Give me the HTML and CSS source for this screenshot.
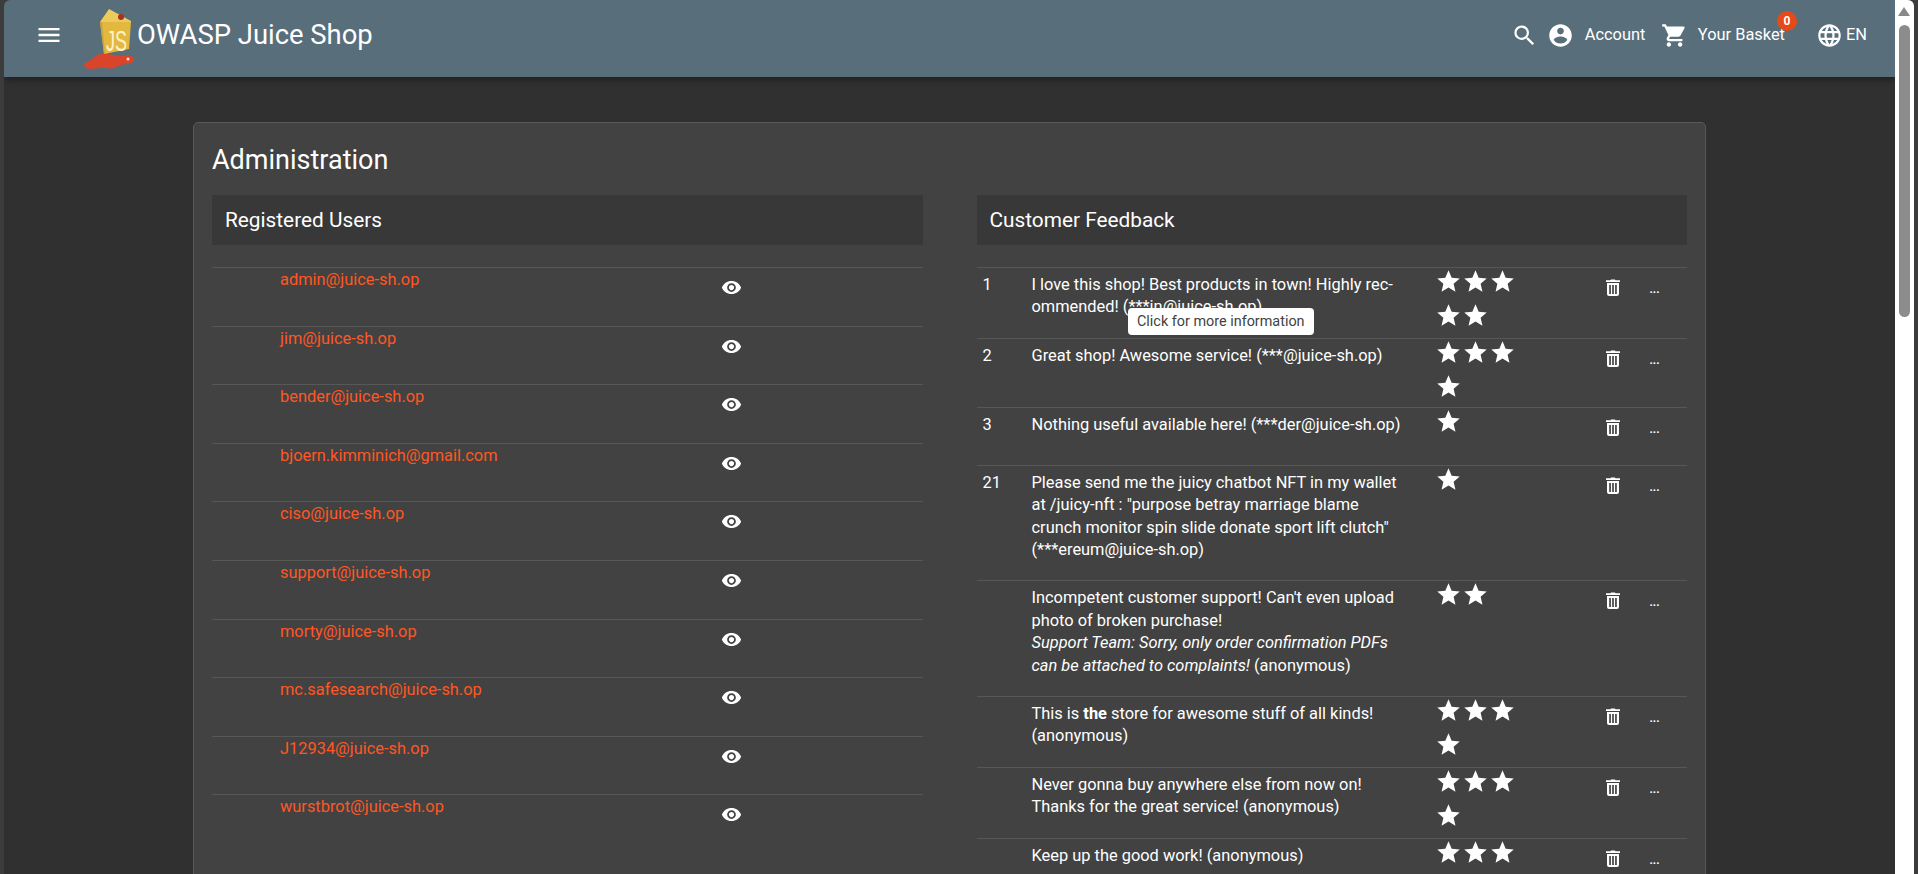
FILE: index.html
```html
<!DOCTYPE html>
<html lang="en">
<head>
    <meta charset="UTF-8">
    <meta name="viewport" content="width=device-width, initial-scale=1.0">
    <title>OWASP Juice Shop</title>
    <link rel="stylesheet" href="styles.css">
</head>
<body>
    <svg class="sprites" width="0" height="0">
        <symbol id="i-star" viewBox="0 0 24 24"><path d="M12 17.27 18.18 21l-1.64-7.03L22 9.24l-7.19-.61L12 2 9.19 8.63 2 9.24l5.46 4.73L5.82 21z"/></symbol>
        <symbol id="i-eye" viewBox="0 0 24 24"><path d="M12 4.5C7 4.5 2.73 7.61 1 12c1.73 4.39 6 7.5 11 7.5s9.27-3.11 11-7.5c-1.73-4.39-6-7.5-11-7.5zM12 17c-2.76 0-5-2.24-5-5s2.24-5 5-5 5 2.24 5 5-2.24 5-5 5zm0-8c-1.66 0-3 1.34-3 3s1.34 3 3 3 3-1.34 3-3-1.34-3-3-3z"/></symbol>
        <symbol id="i-trash" viewBox="0 0 24 24"><path fill-rule="evenodd" d="M10 3.500h4l.5.8H19v1.700H5V4.300h4.500zM6 7h12v11a2 2 0 0 1-2 2H8a2 2 0 0 1-2-2zm2.200 2v9h1.700V9zm2.950 0v9h1.700V9zm2.950 0v9h1.700V9z"/></symbol>
    </svg>

    <div class="app">
        <header class="toolbar">
            <svg class="icon menu-icon" viewBox="0 0 24 24"><path d="M3 18h18v-2H3v2zm0-5h18v-2H3v2zm0-7v2h18V6H3z"/></svg>
            <svg class="logo" viewBox="0 0 52 60">
                <path d="M0 55c4-1 8-5 13-8 4-3 8-3 12-2l14 2c4-1 9-1 11 1 2 3 0 6-4 7-5 0-9 1-13 3-3 2-5 2-9 1-7-1-12 1-17 1-3 0-5-2-7-5z" fill="#d8452a"/>
                <circle cx="45" cy="50" r="1.500" fill="#f7d9c8"/>
                <path d="M17 13 26 0l22 12v2z" fill="#ecca5c"/>
                <path d="M17 13h31l-2 27-25 5z" fill="#e3b841"/>
                <path d="M17 13l4 32h1L19 13z" fill="#c9a23c"/>
                <circle cx="38" cy="8" r="3" fill="#a5331f"/>
                <text class="logo-text" x="23" y="42" textLength="21" lengthAdjust="spacingAndGlyphs">JS</text>
            </svg>
            <span class="brand">OWASP Juice Shop</span>
            <span class="spacer"></span>
            <svg class="icon search-icon" viewBox="0 0 24 24"><path d="M15.5 14h-.79l-.28-.27A6.471 6.471 0 0 0 16 9.500 6.500 6.500 0 1 0 9.500 16c1.610 0 3.090-.59 4.230-1.570l.27.28v.79l5 4.990L20.490 19l-4.990-5zm-6 0C7.010 14 5 11.990 5 9.500S7.010 5 9.500 5 14 7.010 14 9.500 11.990 14 9.500 14z"/></svg>
            <svg class="icon account-icon" viewBox="0 0 24 24"><path d="M12 2C6.480 2 2 6.480 2 12s4.480 10 10 10 10-4.480 10-10S17.520 2 12 2zm0 3c1.660 0 3 1.340 3 3s-1.340 3-3 3-3-1.340-3-3 1.340-3 3-3zm0 14.200c-2.500 0-4.710-1.280-6-3.220.03-1.990 4-3.080 6-3.080 1.990 0 5.970 1.090 6 3.080-1.290 1.940-3.500 3.220-6 3.220z"/></svg>
            <span class="nav-label account-label">Account</span>
            <svg class="icon cart-icon" viewBox="0 0 24 24"><path d="M7 18c-1.100 0-1.990.9-1.990 2S5.900 22 7 22s2-.9 2-2-.9-2-2-2zM1 2v2h2l3.600 7.590-1.350 2.450c-.16.28-.25.61-.25.960 0 1.100.9 2 2 2h12v-2H7.420c-.14 0-.25-.11-.25-.25l.03-.12.9-1.630h7.450c.75 0 1.410-.41 1.750-1.030l3.580-6.490A1 1 0 0 0 20 4H5.210l-.94-2H1zm16 16c-1.100 0-1.990.9-1.990 2s.89 2 1.990 2 2-.9 2-2-.9-2-2-2z"/></svg>
            <span class="basket">
                <span class="nav-label">Your Basket</span>
                <span class="badge">0</span>
            </span>
            <svg class="icon globe-icon" viewBox="0 0 24 24"><path d="M11.990 2C6.470 2 2 6.480 2 12s4.470 10 9.990 10C17.520 22 22 17.520 22 12S17.520 2 11.990 2zm6.930 6h-2.950a15.650 15.650 0 0 0-1.380-3.560A8.030 8.030 0 0 1 18.920 8zM12 4.040c.83 1.200 1.480 2.530 1.910 3.960h-3.820c.43-1.430 1.080-2.760 1.910-3.960zM4.260 14C4.100 13.360 4 12.690 4 12s.1-1.360.26-2h3.380c-.08.660-.14 1.320-.14 2s.06 1.340.14 2H4.260zm.82 2h2.950c.32 1.250.78 2.450 1.380 3.560A7.987 7.987 0 0 1 5.080 16zm2.950-8H5.080a7.987 7.987 0 0 1 4.330-3.560A15.650 15.650 0 0 0 8.030 8zM12 19.960c-.83-1.200-1.480-2.530-1.910-3.960h3.820c-.43 1.430-1.080 2.760-1.910 3.960zM14.340 14H9.660c-.09-.66-.16-1.320-.16-2s.07-1.350.16-2h4.680c.09.650.16 1.320.16 2s-.07 1.340-.16 2zm.25 5.560c.6-1.110 1.060-2.310 1.380-3.560h2.950a8.030 8.030 0 0 1-4.330 3.560zM16.360 14c.08-.66.14-1.320.14-2s-.06-1.340-.14-2h3.380c.16.640.26 1.310.26 2s-.1 1.360-.26 2h-3.380z"/></svg>
            <span class="nav-label lang-label">EN</span>
        </header>

        <main class="content">
            <section class="card">
                <h1 class="card-title">Administration</h1>
                <div class="columns">
                    <div class="column">
                        <h2 class="column-head">Registered Users</h2>
                        <div class="user-list">
                            <div class="user-row"><span class="email">admin@juice-sh.op</span><svg class="eye"><use href="#i-eye"/></svg></div>
                            <div class="user-row"><span class="email">jim@juice-sh.op</span><svg class="eye"><use href="#i-eye"/></svg></div>
                            <div class="user-row"><span class="email">bender@juice-sh.op</span><svg class="eye"><use href="#i-eye"/></svg></div>
                            <div class="user-row"><span class="email">bjoern.kimminich@gmail.com</span><svg class="eye"><use href="#i-eye"/></svg></div>
                            <div class="user-row"><span class="email">ciso@juice-sh.op</span><svg class="eye"><use href="#i-eye"/></svg></div>
                            <div class="user-row"><span class="email">support@juice-sh.op</span><svg class="eye"><use href="#i-eye"/></svg></div>
                            <div class="user-row"><span class="email">morty@juice-sh.op</span><svg class="eye"><use href="#i-eye"/></svg></div>
                            <div class="user-row"><span class="email">mc.safesearch@juice-sh.op</span><svg class="eye"><use href="#i-eye"/></svg></div>
                            <div class="user-row"><span class="email">J12934@juice-sh.op</span><svg class="eye"><use href="#i-eye"/></svg></div>
                            <div class="user-row"><span class="email">wurstbrot@juice-sh.op</span><svg class="eye"><use href="#i-eye"/></svg></div>
                        </div>
                    </div>

                    <div class="column">
                        <h2 class="column-head">Customer Feedback</h2>
                        <div class="feedback-list">
                            <div class="feedback-row">
                                <span class="fb-id">1</span>
                                <p class="fb-text">I love this shop! Best products in town! Highly rec&shy;ommended! (***in@juice-sh.op)</p>
                                <div class="stars"><svg class="star"><use href="#i-star"/></svg><svg class="star"><use href="#i-star"/></svg><svg class="star"><use href="#i-star"/></svg><svg class="star"><use href="#i-star"/></svg><svg class="star"><use href="#i-star"/></svg></div>
                                <svg class="trash"><use href="#i-trash"/></svg>
                                <span class="dots">...</span>
                            </div>
                            <div class="feedback-row">
                                <span class="fb-id">2</span>
                                <p class="fb-text">Great shop! Awesome service! (***@juice-sh.op)</p>
                                <div class="stars"><svg class="star"><use href="#i-star"/></svg><svg class="star"><use href="#i-star"/></svg><svg class="star"><use href="#i-star"/></svg><svg class="star"><use href="#i-star"/></svg></div>
                                <svg class="trash"><use href="#i-trash"/></svg>
                                <span class="dots">...</span>
                            </div>
                            <div class="feedback-row">
                                <span class="fb-id">3</span>
                                <p class="fb-text">Nothing useful available here! (***der@juice-sh.op)</p>
                                <div class="stars"><svg class="star"><use href="#i-star"/></svg></div>
                                <svg class="trash"><use href="#i-trash"/></svg>
                                <span class="dots">...</span>
                            </div>
                            <div class="feedback-row">
                                <span class="fb-id">21</span>
                                <p class="fb-text">Please send me the juicy chatbot NFT in my wallet at /juicy-nft : "purpose betray marriage blame crunch monitor spin slide donate sport lift clutch" (***ereum@juice-sh.op)</p>
                                <div class="stars"><svg class="star"><use href="#i-star"/></svg></div>
                                <svg class="trash"><use href="#i-trash"/></svg>
                                <span class="dots">...</span>
                            </div>
                            <div class="feedback-row">
                                <span class="fb-id"></span>
                                <p class="fb-text">Incompetent customer support! Can't even upload photo of broken purchase!<br><em>Support Team: Sorry, only order confirmation PDFs can be attached to complaints!</em> (anonymous)</p>
                                <div class="stars"><svg class="star"><use href="#i-star"/></svg><svg class="star"><use href="#i-star"/></svg></div>
                                <svg class="trash"><use href="#i-trash"/></svg>
                                <span class="dots">...</span>
                            </div>
                            <div class="feedback-row">
                                <span class="fb-id"></span>
                                <p class="fb-text">This is <strong>the</strong> store for awesome stuff of all kinds! (anonymous)</p>
                                <div class="stars"><svg class="star"><use href="#i-star"/></svg><svg class="star"><use href="#i-star"/></svg><svg class="star"><use href="#i-star"/></svg><svg class="star"><use href="#i-star"/></svg></div>
                                <svg class="trash"><use href="#i-trash"/></svg>
                                <span class="dots">...</span>
                            </div>
                            <div class="feedback-row">
                                <span class="fb-id"></span>
                                <p class="fb-text">Never gonna buy anywhere else from now on! Thanks for the great service! (anonymous)</p>
                                <div class="stars"><svg class="star"><use href="#i-star"/></svg><svg class="star"><use href="#i-star"/></svg><svg class="star"><use href="#i-star"/></svg><svg class="star"><use href="#i-star"/></svg></div>
                                <svg class="trash"><use href="#i-trash"/></svg>
                                <span class="dots">...</span>
                            </div>
                            <div class="feedback-row">
                                <span class="fb-id"></span>
                                <p class="fb-text">Keep up the good work! (anonymous)</p>
                                <div class="stars"><svg class="star"><use href="#i-star"/></svg><svg class="star"><use href="#i-star"/></svg><svg class="star"><use href="#i-star"/></svg></div>
                                <svg class="trash"><use href="#i-trash"/></svg>
                                <span class="dots">...</span>
                            </div>
                        </div>
                    </div>
                </div>
            </section>
        </main>

        <div class="tooltip">Click for more information</div>
    </div>

    <aside class="scrollbar">
        <span class="scroll-arrow"></span>
        <span class="scroll-thumb"></span>
    </aside>
</body>
</html>
```

FILE: styles.css
```css
/* Global Styles */
html, body {
    height: 100%;
}

body {
    margin: 0;
    display: flex;
    height: 100vh;
    padding: 0 4px;
    box-sizing: border-box;
    overflow: hidden;
    background-color: #3c3c3c;
    color: #ffffff;
    font-family: Roboto, sans-serif;
    font-size: 16.4px;
    line-height: 22.4px;
}

.sprites {
    position: absolute;
}

.app {
    position: relative;
    flex: 1;
    min-width: 0;
    background-color: #303030;
    border-top-left-radius: 6px;
    overflow: hidden;
}

/* Toolbar */
.toolbar {
    position: relative;
    z-index: 2;
    display: flex;
    align-items: center;
    height: 77px;
    padding: 0 28px 7px 31px;
    box-sizing: border-box;
    background-color: #586e7b;
    box-shadow: 0 3px 6px rgba(0, 0, 0, 0.35);
}

.icon {
    flex: none;
    fill: #ffffff;
    width: 27px;
    height: 27px;
}

.menu-icon {
    width: 28px;
    height: 28px;
}

.logo {
    flex: none;
    width: 52px;
    height: 60px;
    margin-left: 20px;
    margin-top: 8px;
    overflow: visible;
}

.logo-text {
    font-family: "Liberation Sans", sans-serif;
    font-size: 30px;
    fill: #fff3c4;
}

.brand {
    margin-left: 2px;
    font-size: 27.4px;
}

.spacer {
    flex: 1;
}

.nav-label {
    font-size: 16.4px;
}

.account-icon {
    margin-left: 9px;
}

.account-label {
    margin-left: 10.5px;
}

.cart-icon {
    margin-left: 15.5px;
}

.basket {
    position: relative;
    margin-left: 10px;
}

.badge {
    position: absolute;
    top: -13px;
    right: -12px;
    width: 20px;
    height: 20px;
    border-radius: 50%;
    background-color: #e64a19;
    font-size: 12px;
    font-weight: 700;
    line-height: 20px;
    text-align: center;
}

.globe-icon {
    margin-left: 31px;
}

.lang-label {
    margin-left: 3px;
}

/* Main card */
.content {
    padding: 45px 0 0 189px;
}

.card {
    width: 1513px;
    box-sizing: border-box;
    padding: 19px 18px 24px;
    background-color: #424242;
    border: 1px solid #585858;
    border-radius: 5px;
}

.card-title {
    margin: 0;
    font-size: 27px;
    font-weight: 400;
    line-height: 36px;
}

.columns {
    display: flex;
    gap: 54px;
    margin-top: 17px;
}

.column {
    flex: 1;
    min-width: 0;
}

.column-head {
    margin: 0 0 22px;
    padding: 0 13px;
    background-color: #383838;
    font-size: 20.8px;
    font-weight: 400;
    line-height: 50px;
}

/* Registered users */
.user-row {
    display: grid;
    grid-template-columns: 68px 441px 20px;
    min-height: 58.6px;
    box-sizing: border-box;
    border-top: 1px solid #575757;
}

.email {
    grid-column: 2;
    padding-top: 1px;
    color: #ff5722;
}

.eye {
    width: 21px;
    height: 21px;
    margin-top: 9px;
    fill: #ffffff;
}

/* Customer feedback */
.feedback-row {
    display: grid;
    grid-template-columns: 55px 403.5px 165.5px 42px 30px;
    min-height: 58px;
    box-sizing: border-box;
    border-top: 1px solid #575757;
}

.fb-id {
    padding: 6px 0 0 6px;
}

.fb-text {
    margin: 0;
    padding: 6px 0 19px;
    width: 378px;
}

.stars {
    display: flex;
    flex-wrap: wrap;
    align-content: flex-start;
    width: 90px;
}

.star {
    width: 27px;
    height: 27px;
    margin-bottom: 7px;
    fill: #ffffff;
}

.trash {
    width: 24px;
    height: 24px;
    margin-top: 8px;
    fill: #ffffff;
}

.dots {
    font-size: 11.5px;
    font-weight: 700;
    padding: 10px 0 0 7px;
}

/* Tooltip over the first feedback row */
.tooltip {
    position: absolute;
    z-index: 3;
    top: 308px;
    left: 1124px;
    padding: 0 9px;
    background-color: #ffffff;
    border-radius: 4px;
    color: #424242;
    font-size: 14.4px;
    line-height: 27px;
}

/* Scrollbar */
.scrollbar {
    position: relative;
    flex: none;
    width: 19px;
    background-color: #ffffff;
    border-top-right-radius: 6px;
}

.scroll-arrow {
    position: absolute;
    top: 7px;
    left: 3px;
    border-left: 6px solid transparent;
    border-right: 6px solid transparent;
    border-bottom: 9px solid #8a8a8a;
}

.scroll-thumb {
    position: absolute;
    top: 25px;
    left: 4px;
    width: 11px;
    height: 292px;
    border-radius: 6px;
    background-color: #8c8c8c;
}
```
